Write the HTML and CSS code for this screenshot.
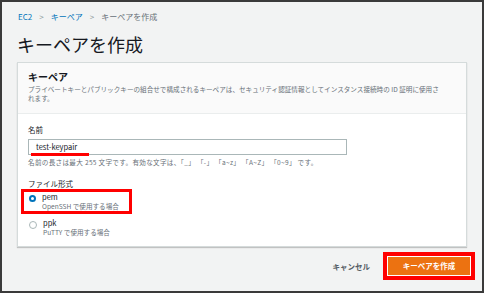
FILE: index.html
```html
<!DOCTYPE html>
<html lang="ja">

<head>
    <meta charset="UTF-8">
    <meta name="viewport" content="width=device-width, initial-scale=1.0">
    <title>キーペアを作成</title>
    <link rel="stylesheet" href="styles.css">
</head>

<body>
    <div class="page">
        <!-- パンくず -->
        <div class="breadcrumb">
            <a>EC2</a>
            <span class="sep">&gt;</span>
            <a>キーペア</a>
            <span class="sep">&gt;</span>
            <span class="current">キーペアを作成</span>
        </div>

        <h1 class="title">キーペアを作成</h1>

        <div class="panel">
            <div class="panel-header">
                <h2>キーペア</h2>
                <p>プライベートキーとパブリックキーの組合せで構成されるキーペアは、セキュリティ認証情報としてインスタンス接続時の ID 証明に使用されます。</p>
            </div>
            <div class="panel-body">
                <div class="field">
                    <label class="label">名前</label>
                    <div class="input">
                        <span class="value">test-keypair</span>
                        <span class="mark"></span>
                    </div>
                    <div class="hint">名前の長さは最大 255 文字です。有効な文字は、「_」 「-」 「a~z」 「A~Z」 「0~9」 です。</div>
                </div>

                <div class="field">
                    <label class="label">ファイル形式</label>
                    <div class="options">
                        <div class="option checked highlight">
                            <span class="radio"></span>
                            <div>
                                <div class="opt-name">pem</div>
                                <div class="opt-desc">OpenSSH で使用する場合</div>
                            </div>
                        </div>
                        <div class="option">
                            <span class="radio"></span>
                            <div>
                                <div class="opt-name">ppk</div>
                                <div class="opt-desc">PuTTY で使用する場合</div>
                            </div>
                        </div>
                    </div>
                </div>
            </div>
        </div>

        <div class="actions">
            <span class="cancel">キャンセル</span>
            <div class="primary-wrap">
                <span class="primary">キーペアを作成</span>
            </div>
        </div>
    </div>
</body>

</html>
```

FILE: styles.css
```css
body {
    margin: 0;
    padding: 0;
    font-family: "Noto Sans CJK JP", "Noto Sans", sans-serif;
    color: #16191f;
}

.page {
    width: 484px;
    height: 293px;
    box-sizing: border-box;
    border: 2px solid #3a3a3a;
    background: #f2f3f3;
    padding: 0 15px 0 15px;
    overflow: hidden;
}

.breadcrumb {
    display: flex;
    align-items: center;
    gap: 7px;
    height: 12px;
    margin-top: 8px;
    margin-left: 1px;
    font-size: 8px;
    color: #687078;
}

.breadcrumb a {
    color: #0073bb;
}

.breadcrumb .sep {
    color: #879596;
    font-size: 8px;
}

.title {
    margin: 11px 0 0 0;
    height: 29px;
    font-size: 18px;
    font-weight: normal;
    line-height: 22px;
    color: #16191f;
}

.panel {
    background: #fff;
    border: 1px solid #d5dbdb;
    box-shadow: 0 1px 1px rgba(0, 0, 0, 0.2);
    height: 185px;
    box-sizing: border-box;
}

.panel-header {
    background: #fafafa;
    border-bottom: 1px solid #eaeded;
    padding: 7px 10px 0 10px;
    height: 51px;
    box-sizing: border-box;
}

.panel-header h2 {
    margin: 0;
    font-size: 10px;
    line-height: 14px;
    font-weight: bold;
}

.panel-header p {
    margin: 1px 0 0 0;
    font-size: 6.6px;
    line-height: 9px;
    color: #687078;
    width: 414px;
}

.panel-body {
    padding: 11px 10px 0 10px;
}

.field {
    margin-bottom: 12px;
}

.label {
    display: block;
    font-size: 7.5px;
    line-height: 10px;
    color: #16191f;
}

.input {
    position: relative;
    margin-top: 4px;
    width: 319px;
    height: 16px;
    box-sizing: border-box;
    border: 1px solid #aab7b8;
    background: #fff;
    padding-left: 7px;
    font-size: 7.5px;
    line-height: 14px;
}

.input .mark {
    position: absolute;
    left: 2px;
    top: 13px;
    width: 58px;
    height: 3px;
    background: #ff0000;
}

.hint {
    margin-top: 3px;
    font-size: 6.6px;
    line-height: 9px;
    letter-spacing: 0.3px;
    color: #687078;
}

.options {
    margin-top: 0;
}

.option {
    display: flex;
    align-items: flex-start;
    gap: 6px;
    padding: 1px 0 1px 1px;
    width: 100px;
}

.option.highlight {
    margin-left: -7px;
    padding: 0 0 0 5px;
    border: 3px solid #ff0000;
    margin-bottom: 3px;
}

.radio {
    flex: none;
    width: 6px;
    height: 6px;
    margin-top: 3px;
    border: 1px solid #aab7b8;
    border-radius: 50%;
    background: #fff;
}

.option.checked .radio {
    width: 3px;
    height: 3px;
    border: 2.5px solid #0073bb;
}

.opt-name {
    font-size: 7.5px;
    line-height: 10px;
}

.opt-desc {
    font-size: 6.6px;
    line-height: 9px;
    color: #687078;
}

.actions {
    display: flex;
    justify-content: flex-end;
    align-items: center;
    gap: 11px;
    margin-top: 5px;
    margin-right: -8px;
}

.cancel {
    font-size: 7.5px;
    font-weight: bold;
    color: #545b64;
    margin-right: 2px;
}

.primary-wrap {
    border: 4px solid #ff0000;
    padding: 1px;
    background: #fff;
}

.primary {
    display: block;
    width: 82px;
    height: 18px;
    line-height: 18px;
    text-align: center;
    background: #ec7211;
    color: #fff;
    font-size: 7.5px;
    font-weight: bold;
}
```
